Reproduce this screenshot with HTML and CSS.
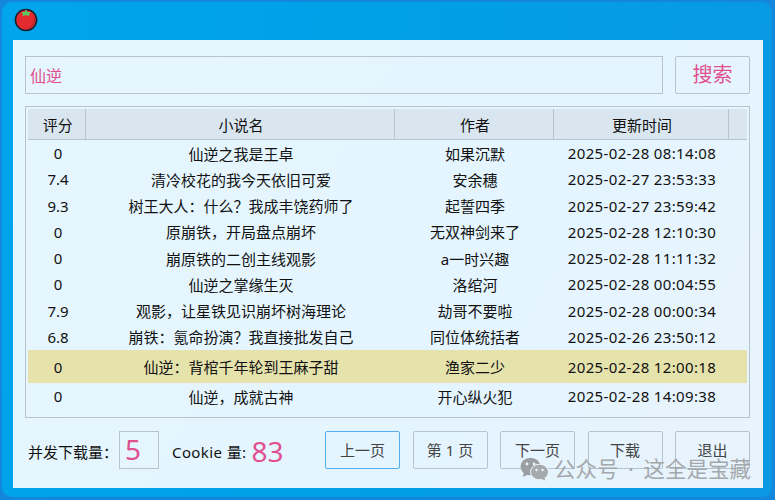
FILE: index.html

```html
<!DOCTYPE html>
<html lang="zh">
<head>
    <meta charset="UTF-8">
    <title>小说下载</title>
    <link rel="stylesheet" href="styles.css">
</head>
<body>
    <div class="window">
        <div class="titlebar">
            <svg class="logo" width="26" height="26" viewBox="0 0 26 26">
                <circle cx="13" cy="13" r="10.6" fill="#e32b2f" stroke="#14202c" stroke-width="1.5"/>
                <path d="M20 7.500a10 10 0 0 1-9 14.600a10 10 0 0 0 11-7.600a10 10 0 0 0-2-7z" fill="#a8262c"/>
                <path d="M13 2.300l1.400 2.600l3 .2l-1.400 2.600l.4 1.600l-3.400-1.400l-3.400 1.400l.4-1.600l-1.400-2.600l3-.2z" fill="#5cc765"/>
            </svg>
        </div>
        <div class="panel">
            <div class="search-row">
                <div class="search-input">仙逆</div>
                <button class="btn btn-search">搜索</button>
            </div>
            <div class="table-box">
                <table class="novels">
                    <colgroup>
                        <col class="col-score">
                        <col class="col-name">
                        <col class="col-author">
                        <col class="col-time">
                        <col class="col-rest">
                    </colgroup>
                    <thead>
                        <tr><th>评分</th><th>小说名</th><th>作者</th><th>更新时间</th><th></th></tr>
                    </thead>
                    <tbody>
                        <tr><td>0</td><td>仙逆之我是王卓</td><td>如果沉默</td><td class="time">2025-02-28 08:14:08</td><td></td></tr>
                        <tr><td>7.4</td><td>清冷校花的我今天依旧可爱</td><td>安余穗</td><td class="time">2025-02-27 23:53:33</td><td></td></tr>
                        <tr><td>9.3</td><td>树王大人：什么？我成丰饶药师了</td><td>起誓四季</td><td class="time">2025-02-27 23:59:42</td><td></td></tr>
                        <tr><td>0</td><td>原崩铁，开局盘点崩坏</td><td>无双神剑来了</td><td class="time">2025-02-28 12:10:30</td><td></td></tr>
                        <tr><td>0</td><td>崩原铁的二创主线观影</td><td>a一时兴趣</td><td class="time">2025-02-28 11:11:32</td><td></td></tr>
                        <tr><td>0</td><td>仙逆之掌缘生灭</td><td>洛绾河</td><td class="time">2025-02-28 00:04:55</td><td></td></tr>
                        <tr><td>7.9</td><td>观影，让星铁见识崩坏树海理论</td><td>劫哥不要啦</td><td class="time">2025-02-28 00:00:34</td><td></td></tr>
                        <tr><td>6.8</td><td>崩铁：氪命扮演？我直接批发自己</td><td>同位体统括者</td><td class="time">2025-02-26 23:50:12</td><td></td></tr>
                        <tr class="selected"><td>0</td><td>仙逆：背棺千年轮到王麻子甜</td><td>渔家二少</td><td class="time">2025-02-28 12:00:18</td><td></td></tr>
                        <tr><td>0</td><td>仙逆，成就古神</td><td>开心纵火犯</td><td class="time">2025-02-28 14:09:38</td><td></td></tr>
                    </tbody>
                </table>
            </div>
            <div class="bottom-row">
                <span class="label">并发下载量：</span>
                <div class="count-input">5</div>
                <span class="label cookie-label">Cookie 量:</span>
                <span class="cookie-count">83</span>
                <div class="actions">
                    <button class="btn btn-focus">上一页</button>
                    <button class="btn">第 1 页</button>
                    <button class="btn">下一页</button>
                    <button class="btn">下载</button>
                    <button class="btn">退出</button>
                </div>
            </div>
        </div>
        <div class="watermark">
            <svg width="29" height="24" viewBox="0 0 29 24">
                <ellipse cx="10.500" cy="9.500" rx="10" ry="8.800" fill="#9a9fa3"/>
                <path d="M4 15l-1 5l6-3z" fill="#9a9fa3"/>
                <ellipse cx="19.500" cy="15" rx="9" ry="7.800" fill="#a5aaae" stroke="#eef6fb" stroke-width="1"/>
                <path d="M24 20l1.500 3.500l-5.500-2z" fill="#a5aaae"/>
                <circle cx="7" cy="7" r="1.400" fill="#eef6fb"/>
                <circle cx="14" cy="7" r="1.400" fill="#eef6fb"/>
                <circle cx="16.500" cy="13" r="1.200" fill="#eef6fb"/>
                <circle cx="22.500" cy="13" r="1.200" fill="#eef6fb"/>
            </svg>
            <span>公众号 · 这全是宝藏</span>
        </div>
    </div>
</body>
</html>
```

FILE: styles.css

```css
html, body {
    margin: 0;
    padding: 0;
    background-color: #1487dc;
    overflow: hidden;
}

body {
    box-sizing: border-box;
    height: 500px;
    padding: 2px 3px 3px 2px;
    font-family: "Noto Sans", "Noto Sans CJK SC", sans-serif;
    font-size: 15px;
    color: #111;
}

.window {
    position: relative;
    height: 495px;
    box-sizing: border-box;
    padding: 1px 9px 0 11px;
    border-radius: 10px;
    background: linear-gradient(100deg, #00a5ec 0%, #009fe6 50%, #0b98e4 100%);
}

.titlebar {
    height: 37px;
    display: flex;
    align-items: flex-start;
}

.logo {
    display: block;
    margin: 4px 0 0 0;
}

.panel {
    height: 448px;
    box-sizing: border-box;
    padding: 16px 13px 0 12px;
    background: linear-gradient(120deg, #e5f6fe 0%, #e4f5ff 60%, #e8f3fd 100%);
}

.search-row {
    display: flex;
    gap: 12px;
    height: 38px;
}

.search-input {
    flex: 1;
    display: flex;
    align-items: center;
    padding-left: 4px;
    border: 1px solid #b7c4cd;
    color: #e0508f;
    font-size: 16px;
}

.btn {
    width: 75px;
    height: 38px;
    padding: 0;
    border: 1px solid #b7c4cd;
    border-radius: 2px;
    background: transparent;
    color: #444;
    font-family: inherit;
    font-size: 15px;
    line-height: 1;
}

.btn-search {
    color: #e0508f;
    font-size: 20px;
}

.btn-focus {
    border-color: #55ace8;
}

.table-box {
    margin-top: 12px;
    height: 312px;
    box-sizing: border-box;
    padding: 2px;
    border: 1px solid #b7c4cd;
}

.novels {
    width: 100%;
    table-layout: fixed;
    border-collapse: collapse;
}

.col-score { width: 57px; }
.col-name { width: 309px; }
.col-author { width: 159px; }
.col-time { width: 175px; }

.novels th {
    height: 30px;
    padding: 0 0 0 3px;
    background-color: #d9e6ef;
    border-right: 1px solid #b7c4cd;
    border-bottom: 1px solid #b7c4cd;
    font-weight: normal;
}

.novels th:last-child {
    border-right: none;
}

.novels td {
    height: 26.250px;
    padding: 0 0 0 3px;
    text-align: center;
    white-space: nowrap;
}

.novels td.time {
    letter-spacing: 0.350px;
}

.novels tr.selected td {
    height: 33px;
    background-color: #e5e2ac;
}

.novels tr.selected + tr td {
    padding-bottom: 2px;
}

.bottom-row {
    display: flex;
    align-items: center;
    height: 38px;
    margin-top: 13px;
}

.label {
    margin-left: 3px;
    padding-top: 2px;
    white-space: nowrap;
}

.count-input {
    box-sizing: border-box;
    width: 40px;
    height: 38px;
    margin-left: 1px;
    padding-left: 5px;
    border: 1px solid #b7c4cd;
    color: #e0508f;
    font-size: 28px;
    line-height: 35px;
}

.cookie-label {
    margin-left: 13px;
    letter-spacing: 0.400px;
}

.cookie-count {
    margin-left: 5px;
    padding-top: 2px;
    color: #e0508f;
    font-size: 28px;
    line-height: 34px;
}

.actions {
    margin-left: auto;
    display: flex;
    gap: 12.500px;
}

.watermark {
    position: absolute;
    left: 518px;
    top: 455px;
    display: flex;
    align-items: center;
    gap: 5px;
    color: #a4a8ab;
    font-size: 21.500px;
    line-height: 1;
    word-spacing: 4px;
    white-space: nowrap;
}
```
